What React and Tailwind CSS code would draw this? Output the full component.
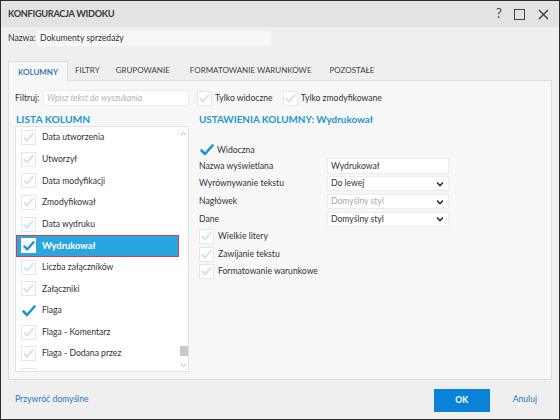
import React from "react";

const FONT = { fontFamily: "Lato, 'Open Sans', sans-serif" };

function Box({ state = "off", className = "" }) {
  if (state === "on") {
    return (
      <span className={"inline-flex items-center justify-center w-[15px] h-[15px] shrink-0 " + className}>
        <svg width="14" height="12" viewBox="0 0 14 12">
          <path d="M1.5 6.5 L5 10 L12.5 1.5" fill="none" stroke="#1a95d6" strokeWidth="2.6" strokeLinecap="round" strokeLinejoin="round" />
        </svg>
      </span>
    );
  }
  if (state === "sel") {
    return (
      <span className={"inline-flex items-center justify-center w-[15px] h-[15px] shrink-0 bg-white " + className}>
        <svg width="12" height="10" viewBox="0 0 14 12">
          <path d="M1.5 6.5 L5 10 L12.5 1.5" fill="none" stroke="#1a95d6" strokeWidth="2.8" strokeLinecap="round" strokeLinejoin="round" />
        </svg>
      </span>
    );
  }
  return (
    <span className={"inline-flex items-center justify-center w-[15px] h-[15px] shrink-0 bg-white border border-[#e6e6e6] " + className}>
      <svg width="11" height="9" viewBox="0 0 14 12">
        <path d="M1.5 6.5 L5 10 L12.5 1.5" fill="none" stroke="#b7dcf0" strokeWidth="2.6" strokeLinecap="round" strokeLinejoin="round" />
        <path d="M1.5 6.5 L5 10 L12.5 1.5" fill="none" stroke="#ffffff" strokeWidth="0.9" strokeLinecap="round" strokeLinejoin="round" />
      </svg>
    </span>
  );
}

function Chevron() {
  return (
    <svg width="8" height="6" viewBox="0 0 8 6">
      <path d="M1 1.5 L4 4.5 L7 1.5" fill="none" stroke="#333" strokeWidth="1.6" />
    </svg>
  );
}

const items = [
  ["Data utworzenia", "off"],
  ["Utworzył", "off"],
  ["Data modyfikacji", "off"],
  ["Zmodyfikował", "off"],
  ["Data wydruku", "off"],
  ["Wydrukował", "sel"],
  ["Liczba załączników", "off"],
  ["Załączniki", "off"],
  ["Flaga", "on"],
  ["Flaga - Komentarz", "off"],
  ["Flaga - Dodana przez", "off"],
  ["", "off"],
];

function Select({ value, disabled }) {
  return (
    <div className="w-[122px] h-[15px] bg-white border border-[#ececec] flex items-center pl-[3px] pr-[4px]">
      <span className={"flex-1 " + (disabled ? "text-[#a8a8a8]" : "text-[#333]")}>{value}</span>
      <Chevron />
    </div>
  );
}

export default function App() {
  return (
    <div style={FONT} className="w-[560px] h-[420px] border border-[#2e2e2e] bg-[#efefef] flex flex-col text-[8.6px] text-[#333] overflow-hidden">
      {/* Title bar */}
      <div className="h-[26px] bg-[#e3e3e3] flex items-center pl-[7px] pr-[6px] shrink-0">
        <span className="text-[9.2px] font-bold text-[#3a3a3a] tracking-[-0.3px] flex-1">KONFIGURACJA WIDOKU</span>
        <span className="text-[13px] text-[#444] w-[14px] text-center mr-[8px]">?</span>
        <span className="w-[11px] h-[11px] border-[1.5px] border-[#444] mr-[13px]"></span>
        <svg width="11" height="11" viewBox="0 0 11 11" className="mr-[4px]">
          <path d="M1 1 L10 10 M10 1 L1 10" stroke="#444" strokeWidth="1.5" />
        </svg>
      </div>

      <div className="px-[7px] flex flex-col">
        {/* Name */}
        <div className="flex items-center mt-[4px] h-[15px]">
          <span className="text-[#333] w-[29px]">Nazwa:</span>
          <div className="w-[234px] h-[15px] bg-[#f7f7f7] flex items-center pl-[3px]">Dokumenty sprzedaży</div>
        </div>

        {/* Tabs */}
        <div className="flex items-end mt-[14px] h-[20px] text-[8px] text-[#444]">
          <div className="h-[20px] w-[60px] bg-[#f7f7f7] border border-b-0 border-[#dcdcdc] flex items-center justify-center text-[#1f6db3] font-semibold relative top-[1px]">KOLUMNY</div>
          <div className="h-[20px] flex items-center pl-[7px]">FILTRY</div>
          <div className="h-[20px] flex items-center pl-[16px]">GRUPOWANIE</div>
          <div className="h-[20px] flex items-center pl-[20px]">FORMATOWANIE WARUNKOWE</div>
          <div className="h-[20px] flex items-center pl-[18px]">POZOSTAŁE</div>
        </div>

        {/* Panel */}
        <div className="h-[300px] bg-[#f7f7f7] border border-[#dcdcdc] flex flex-col pl-[6px] pt-[9px]">
          {/* Filter row */}
          <div className="flex items-center h-[16px]">
            <span className="w-[28px]">Filtruj:</span>
            <div className="w-[146px] h-[16px] bg-white border border-[#ececec] flex items-center pl-[3px] italic text-[#b5b5b5]">Wpisz tekst do wyszukania</div>
            <Box className="ml-[8px]" />
            <span className="ml-[3px]">Tylko widoczne</span>
            <Box className="ml-[10px]" />
            <span className="ml-[3px]">Tylko zmodyfikowane</span>
          </div>

          <div className="flex mt-[7px]">
            {/* Left column */}
            <div className="w-[174px] flex flex-col">
              <div className="text-[10.3px] font-bold text-[#2198d3] h-[13px] leading-[13px] ml-[1px]">LISTA KOLUMN</div>
              <div className="h-[246px] bg-white border border-[#e2e2e2] flex overflow-hidden">
                <div className="flex-1 flex flex-col">
                  {items.map(([label, st], i) =>
                    st === "sel" ? (
                      <div key={i} className="h-[21.6px] shrink-0 flex items-center pl-[4px] bg-[#2ba5e0] border border-[#e03a45] text-white font-bold text-[9.3px]">
                        <Box state="sel" />
                        <span className="ml-[6px]">{label}</span>
                      </div>
                    ) : (
                      <div key={i} className="h-[21.6px] shrink-0 flex items-center pl-[5px]">
                        <Box state={st} />
                        <span className="ml-[6px]">{label}</span>
                      </div>
                    )
                  )}
                </div>
                <div className="w-[9px] flex flex-col items-center pt-[4px] pb-[3px]">
                  <svg width="7" height="5" viewBox="0 0 7 5"><path d="M1 4 L3.5 1.5 L6 4" fill="none" stroke="#b0b0b0" strokeWidth="1" /></svg>
                  <div className="flex-1"></div>
                  <div className="w-[8px] h-[10px] bg-[#c8c8c8] mb-[7px]"></div>
                  <svg width="7" height="5" viewBox="0 0 7 5"><path d="M1 1 L3.5 3.5 L6 1" fill="none" stroke="#b0b0b0" strokeWidth="1" /></svg>
                </div>
              </div>
            </div>

            {/* Right column */}
            <div className="ml-[10px] flex flex-col">
              <div className="text-[9.9px] font-bold text-[#2198d3] h-[13px] leading-[13px]">USTAWIENIA KOLUMNY: Wydrukował</div>
              <div className="flex items-center mt-[17px] h-[14px]">
                <Box state="on" />
                <span className="ml-[3px]">Widoczna</span>
              </div>
              <div className="flex flex-col mt-[1px] gap-[2px]">
                <div className="flex items-center h-[16px]">
                  <span className="w-[128px]">Nazwa wyświetlana</span>
                  <div className="w-[122px] h-[16px] bg-white border border-[#ececec] flex items-center pl-[3px]">Wydrukował</div>
                </div>
                <div className="flex items-center h-[15.7px]">
                  <span className="w-[128px]">Wyrównywanie tekstu</span>
                  <Select value="Do lewej" />
                </div>
                <div className="flex items-center h-[15.7px]">
                  <span className="w-[128px]">Nagłówek</span>
                  <Select value="Domyślny styl" disabled />
                </div>
                <div className="flex items-center h-[15.7px]">
                  <span className="w-[128px]">Dane</span>
                  <Select value="Domyślny styl" />
                </div>
              </div>
              <div className="flex flex-col mt-[2px] gap-[2.5px]">
                <div className="flex items-center h-[15px]">
                  <Box />
                  <span className="ml-[4px]">Wielkie litery</span>
                </div>
                <div className="flex items-center h-[15px]">
                  <Box />
                  <span className="ml-[4px]">Zawijanie tekstu</span>
                </div>
                <div className="flex items-center h-[15px]">
                  <Box />
                  <span className="ml-[4px]">Formatowanie warunkowe</span>
                </div>
              </div>
            </div>
          </div>
        </div>
      </div>

      {/* Footer */}
      <div className="flex-1 flex items-center pl-[14px] pr-[22px]">
        <span className="text-[#2b78c0] flex-1">Przywróć domyślne</span>
        <div className="w-[56px] h-[23px] bg-[#0a82d9] text-white font-bold flex items-center justify-center mt-[2px]">OK</div>
        <span className="ml-[23px] text-[#2b78c0]">Anuluj</span>
      </div>
    </div>
  );
}
